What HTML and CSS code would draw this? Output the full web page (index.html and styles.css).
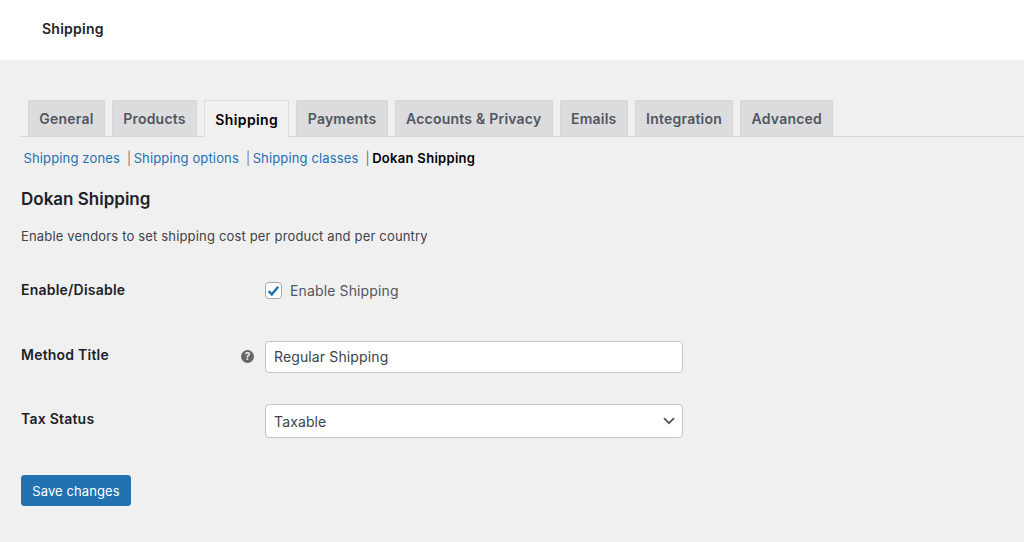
FILE: index.html
```html
<!DOCTYPE html>
<html lang="en">
<head>
<meta charset="utf-8">
<title>Shipping</title>
<link rel="stylesheet" href="styles.css">
</head>
<body>
<header class="topbar"><h1 class="page-title">Shipping</h1></header>
<main class="content">
  <nav class="tabs">
    <a class="tab">General</a>
    <a class="tab">Products</a>
    <a class="tab active">Shipping</a>
    <a class="tab">Payments</a>
    <a class="tab">Accounts &amp; Privacy</a>
    <a class="tab">Emails</a>
    <a class="tab">Integration</a>
    <a class="tab">Advanced</a>
  </nav>
  <ul class="subnav">
    <li class="sub-item"><a class="sub-link">Shipping zones</a><span class="sep">|</span></li>
    <li class="sub-item"><a class="sub-link">Shipping options</a><span class="sep">|</span></li>
    <li class="sub-item"><a class="sub-link">Shipping classes</a><span class="sep">|</span></li>
    <li class="sub-item"><strong class="sub-current">Dokan Shipping</strong></li>
  </ul>
  <h2 class="section-title">Dokan Shipping</h2>
  <p class="section-desc">Enable vendors to set shipping cost per product and per country</p>
  <form class="settings">
    <div class="row row-check">
      <div class="row-label">Enable/Disable</div>
      <label class="check-wrap">
        <span class="checkbox"><svg viewBox="0 0 16 16" width="16" height="16"><path d="M2.8 8.2 6.2 11.6 13 3.4" fill="none" stroke="#2271b1" stroke-width="2.6"/></svg></span>
        <span class="check-text">Enable Shipping</span>
      </label>
    </div>
    <div class="row row-title">
      <div class="row-label">Method Title</div>
      <span class="help"><svg viewBox="0 0 13 13" width="13" height="13"><circle cx="6.5" cy="6.5" r="6.5" fill="#666"/><text x="6.5" y="10" class="help-mark" text-anchor="middle">?</text></svg></span>
      <div class="field">Regular Shipping</div>
    </div>
    <div class="row row-tax">
      <div class="row-label">Tax Status</div>
      <div class="field field-select">Taxable
        <svg class="chevron" viewBox="0 0 12 8" width="12" height="8"><path d="M1 1.2 6 6.2 11 1.2" fill="none" stroke="#50575e" stroke-width="1.8"/></svg>
      </div>
    </div>
    <button class="save" type="button">Save changes</button>
  </form>
</main>
</body>
</html>
```
FILE: styles.css
```css
* { box-sizing: border-box; }
html, body { margin: 0; height: 100%; }
body {
  background: #f0f0f1;
  font-family: Inter, "Liberation Sans", sans-serif;
  font-size: 14px;
  color: #3c434a;
  overflow: hidden;
}
.topbar {
  height: 60px;
  background: #fff;
  padding: 20px 42px 0;
}
.page-title {
  margin: 0;
  font-size: 14px;
  line-height: 17px;
  font-weight: 600;
  letter-spacing: .25px;
  color: #1d2327;
}
.content { padding: 40px 0 0 21px; }
.tabs {
  display: flex;
  gap: 7px;
  height: 37px;
  padding-left: 7px;
  border-bottom: 1px solid #d5d6d8;
}
.tab {
  height: 36px;
  padding: 0 10.3px;
  display: flex;
  align-items: center;
  background: #dcdcde;
  border: 1px solid #d5d6d8;
  border-bottom: 0;
  font-size: 14px;
  font-weight: 600;
  letter-spacing: .22px;
  color: #50575e;
}
.tab.active {
  height: 37px;
  background: #f0f0f1;
  border-color: #dcdcde;
  color: #000;
  letter-spacing: .38px;
}
.subnav {
  display: flex;
  list-style: none;
  margin: 0;
  padding: 13px 0 0 2.5px;
  line-height: 17px;
  font-size: 13px;
  letter-spacing: .14px;
}
.sub-item { display: flex; }
.sub-link { color: #2271b1; }
.sep { margin: 0 2.5px 0 7px; color: #50575e; font-weight: 300; }
.sub-current { color: #000; font-weight: 600; letter-spacing: .3px; }
.section-title {
  margin: 21px 0 0;
  font-size: 17px;
  line-height: 22px;
  font-weight: 600;
  color: #1d2327;
}
.section-desc {
  margin: 17px 0 0;
  font-size: 13px;
  line-height: 18px;
  letter-spacing: .17px;
  color: #3c434a;
}
.settings { margin: 0; }
.row { display: flex; align-items: flex-start; }
.row-label {
  width: 220px;
  font-size: 14px;
  line-height: 18px;
  font-weight: 600;
  letter-spacing: .22px;
  color: #1d2327;
}
.row-check { margin-top: 36px; }
.check-wrap { display: flex; align-items: center; margin-left: 24px; margin-top: -1px; }
.checkbox {
  width: 17px;
  height: 17px;
  background: #fff;
  border: 1px solid #a7aaad;
  border-radius: 4px;
  display: flex;
  align-items: center;
  justify-content: center;
}
.check-text { margin: 1px 0 0 8px; font-size: 14px; line-height: 20px; letter-spacing: .13px; color: #50575e; }
.row-title { margin-top: 40px; }
.row-title .row-label { margin-top: 5px; }
.help { width: 24px; height: 13px; margin-top: 9px; }
.help svg { display: block; }
.help-mark { font: 700 10px Inter, sans-serif; fill: #f0f0f1; }
.field {
  width: 418px;
  height: 32px;
  padding: 0 8px 1px;
  display: flex;
  align-items: center;
  justify-content: space-between;
  background: #fff;
  border: 1px solid #c5c6c8;
  border-radius: 4px;
  font-size: 14px;
  letter-spacing: .13px;
  color: #3c434a;
}
.row-tax { margin-top: 31px; }
.row-tax .row-label { width: 244px; margin-top: 6px; }
.field-select { height: 34px; padding: 0 7px 0 8px; }
.save {
  display: block;
  margin-top: 37px;
  width: 110px;
  height: 31px;
  padding: 0;
  background: #2271b1;
  border: 1px solid #2271b1;
  border-radius: 3px;
  color: #fff;
  font: 400 13px Inter, sans-serif;
  letter-spacing: .1px;
}
```
